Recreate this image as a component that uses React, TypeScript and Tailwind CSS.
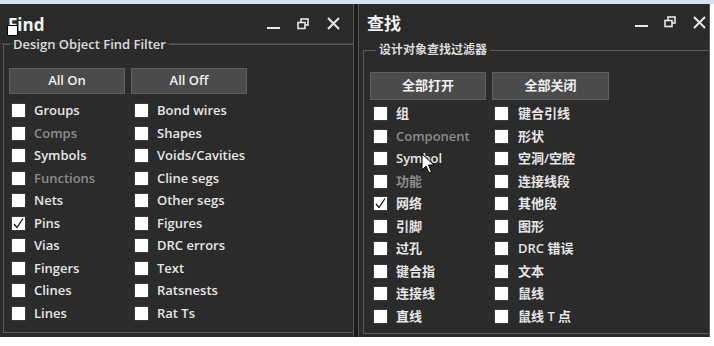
import React from "react";

type Item = { label: string; dim?: boolean; checked?: boolean };

const leftA: Item[] = [
  { label: "Groups" },
  { label: "Comps", dim: true },
  { label: "Symbols" },
  { label: "Functions", dim: true },
  { label: "Nets" },
  { label: "Pins", checked: true },
  { label: "Vias" },
  { label: "Fingers" },
  { label: "Clines" },
  { label: "Lines" },
];
const leftB: Item[] = [
  { label: "Bond wires" },
  { label: "Shapes" },
  { label: "Voids/Cavities" },
  { label: "Cline segs" },
  { label: "Other segs" },
  { label: "Figures" },
  { label: "DRC errors" },
  { label: "Text" },
  { label: "Ratsnests" },
  { label: "Rat Ts" },
];
const rightA: Item[] = [
  { label: "组" },
  { label: "Component", dim: true },
  { label: "Symbol" },
  { label: "功能", dim: true },
  { label: "网络", checked: true },
  { label: "引脚" },
  { label: "过孔" },
  { label: "键合指" },
  { label: "连接线" },
  { label: "直线" },
];
const rightB: Item[] = [
  { label: "键合引线" },
  { label: "形状" },
  { label: "空洞/空腔" },
  { label: "连接线段" },
  { label: "其他段" },
  { label: "图形" },
  { label: "DRC 错误" },
  { label: "文本" },
  { label: "鼠线" },
  { label: "鼠线 T 点" },
];

function Box({ checked }: { checked?: boolean }) {
  return (
    <span className="w-[15px] h-[15px] bg-white border border-[#3a3a3a] flex items-center justify-center shrink-0">
      {checked && (
        <svg width="13" height="13" viewBox="0 0 13 13">
          <path d="M2 7 L5 10.5 L11 1.5" fill="none" stroke="#111" strokeWidth="1.3" />
        </svg>
      )}
    </span>
  );
}

function Column({ items, gap }: { items: Item[]; gap: string }) {
  return (
    <div className="flex flex-col">
      {items.map((it) => (
        <div key={it.label} className={`h-[22.5px] flex items-start ${gap}`}>
          <Box checked={it.checked} />
          <span
            className={`text-[13px] leading-[15px] font-semibold ${
              it.dim ? "text-[#8b8b8b]" : "text-[#e6e6e6]"
            }`}
          >
            {it.label}
          </span>
        </div>
      ))}
    </div>
  );
}

function TitleIcons({ gap }: { gap: string }) {
  return (
    <div className={`flex items-center ${gap} text-[#e8e8e8]`}>
      <svg width="13" height="14" viewBox="0 0 13 14">
        <rect x="0" y="10" width="13" height="2" fill="currentColor" />
      </svg>
      <svg width="13" height="12" viewBox="0 0 13 12">
        <rect x="4" y="1" width="7" height="6" fill="none" stroke="currentColor" strokeWidth="1.6" />
        <rect x="1" y="4.5" width="7" height="6" fill="#2b2b2b" stroke="currentColor" strokeWidth="1.6" />
      </svg>
      <svg width="13" height="13" viewBox="0 0 13 13">
        <path d="M1 1 L12 12 M12 1 L1 12" stroke="currentColor" strokeWidth="2" />
      </svg>
    </div>
  );
}

const btn =
  "h-[26px] bg-[#4b4b4b] border border-[#5f5f5f] text-[#f0f0f0] text-[13px] font-semibold flex items-center justify-center";

export default function App() {
  return (
    <div
      className="w-[714px] h-[346px] bg-white relative overflow-hidden"
      style={{ fontFamily: '"Open Sans", "Noto Sans CJK SC", sans-serif' }}
    >
      <div className="h-[4px] bg-[#dde0ee]" />
      <div className="flex h-[333px]">
        {/* English panel */}
        <div className="w-[354px] bg-[#2b2b2b] border-r border-[#555] flex flex-col relative">
          <div className="h-[40px] flex items-center justify-between pl-[8px] pr-[13px] border-b border-[#404040] bg-[#2a2a2a]">
            <span className="text-[17px] font-bold text-[#f2f2f2] pt-[2px]">Find</span>
            <TitleIcons gap="gap-[17px]" />
          </div>
          <span className="absolute left-[7px] top-[21px] w-[11px] h-[11px] bg-white border border-black rounded-[1px]" />
          <fieldset className="ml-[3px] -mt-[8px] border-l border-t border-b border-[#5a5a5a] flex-1 pl-[5px] pr-0 mb-[4px]">
            <legend className="text-[13px] font-semibold text-[#dcdcdc] px-[3px] ml-[1px] leading-[16px]">
              Design Object Find Filter
            </legend>
            <div className="flex gap-[6px] mt-[16px]">
              <div className={`${btn} w-[116px]`}>All On</div>
              <div className={`${btn} w-[116px]`}>All Off</div>
            </div>
            <div className="flex mt-[9px] pl-[2px]">
              <div className="w-[123px]">
                <Column items={leftA} gap="gap-[8px]" />
              </div>
              <Column items={leftB} gap="gap-[8px]" />
            </div>
          </fieldset>
        </div>
        <div className="w-[4px] bg-[#1c1c1c]" />
        {/* Chinese panel */}
        <div className="w-[352px] bg-[#2b2b2b] border-l border-r border-[#555] flex flex-col relative">
          <div className="h-[36px] flex items-center justify-between pl-[8px] pr-[3px] bg-[#2a2a2a]">
            <span className="text-[17px] font-bold text-[#f2f2f2] pt-[3px]">查找</span>
            <TitleIcons gap="gap-[16px]" />
          </div>
          <fieldset className="ml-[4px] mt-[2px] border-l border-t border-b border-[#5a5a5a] flex-1 pl-[6px] mb-[3px]">
            <legend className="text-[12px] font-semibold text-[#dcdcdc] px-[3px] ml-[6px] leading-[16px]">
              设计对象查找过滤器
            </legend>
            <div className="flex gap-[6px] mt-[14px]">
              <div className={`${btn} w-[116px] h-[28px] font-normal`}>全部打开</div>
              <div className={`${btn} w-[117px] h-[28px] font-normal`}>全部关闭</div>
            </div>
            <div className="flex mt-[6px] pl-[3px]">
              <div className="w-[121px]">
                <Column items={rightA} gap="gap-[8px]" />
              </div>
              <Column items={rightB} gap="gap-[9px]" />
            </div>
          </fieldset>
          <svg className="absolute left-[62px] top-[149px]" width="14" height="22" viewBox="0 0 14 22">
            <path d="M1 1 L1 17 L5 13 L8 20 L10.5 19 L7.5 12 L13 12 Z" fill="white" stroke="black" strokeWidth="1" />
          </svg>
        </div>
      </div>
    </div>
  );
}
